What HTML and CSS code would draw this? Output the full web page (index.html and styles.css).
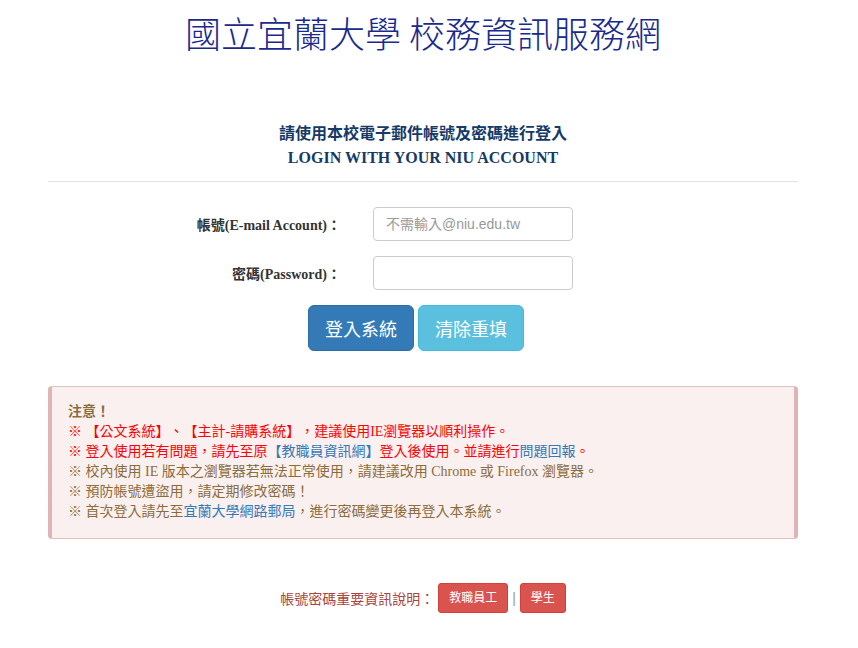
FILE: index.html
```html
<!DOCTYPE html>
<html lang="zh-Hant">
<head>
  <meta charset="UTF-8">
  <meta name="viewport" content="width=device-width, initial-scale=1.0">
  <title>國立宜蘭大學 校務資訊服務網</title>
  <link rel="stylesheet" href="styles.css">
</head>
<body>
  <div id="container">
    <h1 class="site-title">國立宜蘭大學 校務資訊服務網</h1>

    <!-- 登入說明 -->
    <div class="login-head">
      <div class="login-zh">請使用本校電子郵件帳號及密碼進行登入</div>
      <div class="login-en">LOGIN WITH YOUR NIU ACCOUNT</div>
    </div>
    <hr class="divider">

    <!-- 登入表單 -->
    <form class="login-form" onsubmit="return false;">
      <div class="form-row">
        <label class="form-label" for="account">帳號(E-mail Account)：</label>
        <input type="text" id="account" class="form-input" placeholder="不需輸入@niu.edu.tw">
      </div>
      <div class="form-row">
        <label class="form-label" for="password">密碼(Password)：</label>
        <input type="password" id="password" class="form-input">
      </div>
      <div class="form-buttons">
        <button type="submit" class="btn btn-primary">登入系統</button>
        <button type="reset" class="btn btn-info">清除重填</button>
      </div>
    </form>

    <!-- 注意事項 -->
    <div class="notice">
      <div class="notice-title">注意！</div>
      <div class="red">※ 【公文系統】、【主計-請購系統】，建議使用IE瀏覽器以順利操作。</div>
      <div class="red">※ 登入使用若有問題，請先至原<a href="#">【教職員資訊網】</a>登入後使用。並請進行<a href="#">問題回報</a>。</div>
      <div>※ 校內使用 IE 版本之瀏覽器若無法正常使用，請建議改用 Chrome 或 Firefox 瀏覽器。</div>
      <div>※ 預防帳號遭盜用，請定期修改密碼！</div>
      <div>※ 首次登入請先至<a href="#">宜蘭大學網路郵局</a>，進行密碼變更後再登入本系統。</div>
    </div>

    <div class="info-row">
      <span class="info-label">帳號密碼重要資訊說明：</span>
      <a href="#" class="btn-sm">教職員工</a>
      <span class="sep">|</span>
      <a href="#" class="btn-sm">學生</a>
    </div>
  </div>
</body>
</html>
```

FILE: styles.css
```css
* {
  box-sizing: border-box;
}

body {
  margin: 0;
  background: #fff;
  font-family: "Liberation Serif", "Noto Sans CJK TC", serif;
  font-size: 14px;
  color: #333;
  text-spacing-trim: space-all;
}

#container {
  width: 750px;
  margin-left: 48px;
}

.site-title {
  margin: 8px 0 0;
  text-align: center;
  font-family: "Noto Sans CJK TC", sans-serif;
  font-weight: 300;
  font-size: 36px;
  line-height: 48px;
  color: #1a2a8c;
}

.login-head {
  margin-top: 66px;
  text-align: center;
  font-weight: bold;
  font-size: 16px;
  color: #163a66;
}

.login-zh {
  line-height: 24px;
}

.login-en {
  line-height: 24px;
}

.divider {
  margin: 11px 0 0;
  border: 0;
  border-top: 1px solid #e2e2e2;
}

.login-form {
  margin-top: 25px;
}

.form-row {
  display: flex;
  align-items: center;
  margin-bottom: 15px;
}

.form-label {
  width: 293px;
  text-align: right;
  font-weight: bold;
  font-size: 14px;
  color: #333;
}

.form-input {
  margin-left: 32px;
  width: 200px;
  height: 34px;
  padding: 6px 12px;
  border: 1px solid #ccc;
  border-radius: 4px;
  font-family: "Liberation Sans", "Noto Sans CJK TC", sans-serif;
  font-size: 14px;
  color: #555;
}

.form-input::placeholder {
  color: #999;
}

.form-buttons {
  display: flex;
  gap: 4px;
  margin-left: 260px;
}

.btn {
  width: 106px;
  height: 46px;
  border: 1px solid transparent;
  border-radius: 6px;
  font-family: "Liberation Sans", "Noto Sans CJK TC", sans-serif;
  font-size: 18px;
  color: #fff;
  cursor: pointer;
}

.btn-primary {
  background: #337ab7;
  border-color: #2e6da4;
}

.btn-info {
  background: #5bc0de;
  border-color: #46b8da;
}

.notice {
  margin-top: 35px;
  padding: 15px 16px 16px;
  background: #fbf0f0;
  border: 1px solid #e2c0c0;
  border-left: 4px solid #dfb4b4;
  border-right: 4px solid #dfb4b4;
  border-radius: 4px;
  font-size: 14px;
  line-height: 20px;
  color: #8a6d3b;
}

.notice-title {
  font-weight: bold;
}

.notice .red {
  color: #ff0000;
}

.notice a {
  color: #337ab7;
  text-decoration: none;
}

.info-row {
  display: flex;
  justify-content: center;
  align-items: center;
  margin-top: 44px;
  font-family: "Liberation Sans", "Noto Sans CJK TC", sans-serif;
}

.info-label {
  color: #a94442;
  font-size: 14px;
  margin-right: 4px;
}

.btn-sm {
  display: inline-block;
  padding: 5px 10px;
  background: #d9534f;
  border: 1px solid #d43f3a;
  border-radius: 3px;
  color: #fff;
  font-size: 12px;
  line-height: 18px;
  text-decoration: none;
}

.sep {
  margin: 0 4px;
  color: #999;
}
```
